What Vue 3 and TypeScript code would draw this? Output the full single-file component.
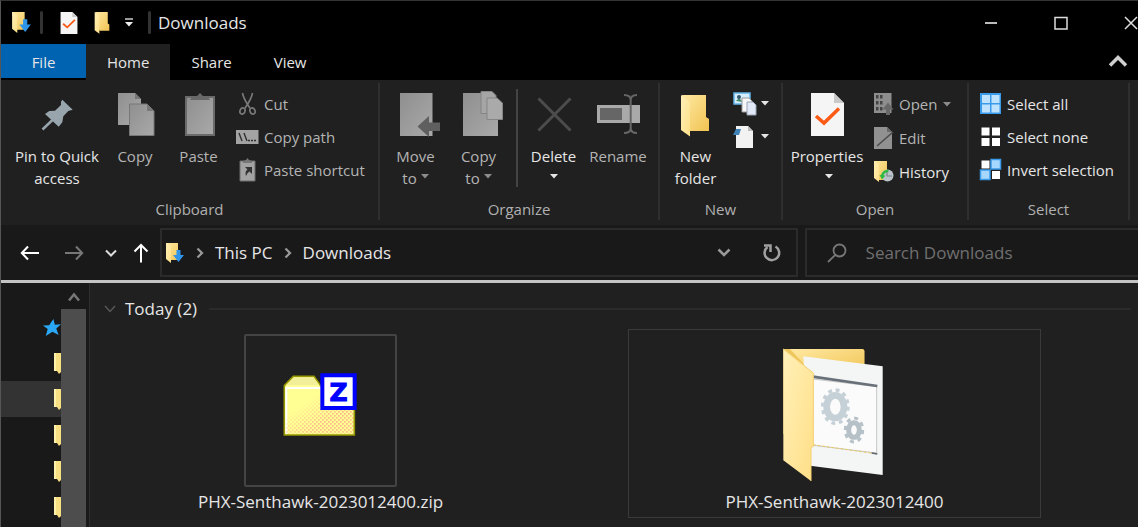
<script setup lang="ts">
interface Command {
  label: string
  icon: string
  muted?: boolean
  caret?: boolean
}

const tabs: string[] = ['Home', 'Share', 'View']

const clipboardCommands: Command[] = [
  { label: 'Cut', icon: 'cut', muted: true },
  { label: 'Copy path', icon: 'path', muted: true },
  { label: 'Paste shortcut', icon: 'shortcut', muted: true },
]

const openCommands: Command[] = [
  { label: 'Open', icon: 'open', muted: true, caret: true },
  { label: 'Edit', icon: 'edit', muted: true },
  { label: 'History', icon: 'history' },
]

const selectCommands: Command[] = [
  { label: 'Select all', icon: 'all' },
  { label: 'Select none', icon: 'none' },
  { label: 'Invert selection', icon: 'invert' },
]

const pinnedFolders: { id: number; current: boolean }[] = [1, 2, 3, 4, 5].map((id) => ({
  id,
  current: id === 2,
}))
</script>

<template>
  <div class="window">
    <svg class="sprite" width="0" height="0" aria-hidden="true">
      <defs>
        <linearGradient id="gold" x1="0" y1="0" x2="1" y2="1">
          <stop offset="0" stop-color="#ffe9a2" />
          <stop offset="1" stop-color="#f0c352" />
        </linearGradient>
        <linearGradient id="flap" x1="0" y1="0" x2="1" y2="1">
          <stop offset="0" stop-color="#fff0b8" />
          <stop offset="1" stop-color="#ffdf87" />
        </linearGradient>
        <linearGradient id="grey" x1="0" y1="0" x2="1" y2="1">
          <stop offset="0" stop-color="#8f8f8f" />
          <stop offset="1" stop-color="#a9a9a9" />
        </linearGradient>
      </defs>
      <symbol id="i-caret" viewBox="0 0 8 5"><path d="M0 0h8L4 4.5z" fill="currentColor" /></symbol>
      <symbol id="i-folder" viewBox="0 0 28 42">
        <path d="M1 0h24v22l3 2v12H9z" fill="url(#gold)" />
        <path d="M0 0l9 7v34.500L0 35z" fill="url(#flap)" />
      </symbol>
      <symbol id="i-downloads" viewBox="0 0 20 22">
        <path d="M1 1h12v11l2 1v5H5z" fill="url(#gold)" />
        <path d="M1 1l5 3v17l-5-4z" fill="url(#flap)" />
        <path d="M11.500 8h4v5H19l-5.500 7L8 13h3.500z" fill="#2f95ea" />
      </symbol>
      <symbol id="i-document" viewBox="0 0 33 43">
        <path d="M0 0h23l10 10v33H0z" fill="#f5f5f5" />
        <path d="M23 0v10h10z" fill="#c9c9c9" />
        <path d="M5 23l8 7L28 15.500" fill="none" stroke="#fb5a14" stroke-width="3.500" />
      </symbol>
      <symbol id="i-cut" viewBox="0 0 24 24">
        <g fill="none" stroke="#7a7a7a" stroke-width="1.600">
          <path d="M6.500 1c1 6 4 10 7.500 15M16.500 1c-1 6-4 10-7.500 15" />
          <ellipse cx="6.500" cy="19" rx="2.500" ry="3.200" transform="rotate(20 6.500 19)" />
          <ellipse cx="16.500" cy="19" rx="2.500" ry="3.200" transform="rotate(-20 16.500 19)" />
        </g>
      </symbol>
      <symbol id="i-path" viewBox="0 0 24 24">
        <path d="M0 5h22.500v14H0z" fill="#a3a3a3" />
        <path d="M3 8l3 8M8 8l3 8M12 15.500h2M15 15.500h2M18 15.500h2" stroke="#303030" stroke-width="1.400" />
      </symbol>
      <symbol id="i-shortcut" viewBox="0 0 24 24">
        <path d="M4 3h15v20H4z" fill="#a3a3a3" stroke="#6d6d6d" />
        <path d="M7 5V3l3-1 1.500-2L13 2l3 1v2z" fill="#777" />
        <path d="M9 9h7v7l-2.500-2.500C11 15 11 16.500 10 18c-1-4 0-5.500 1.500-6.500z" fill="#333" />
      </symbol>
      <symbol id="i-open" viewBox="0 0 24 24">
        <path d="M1 1h17.500v20H1z" fill="#8e8e8e" />
        <path d="M3 3h2.500v3.500H3zM7 3h2.500v3.500H7zM3 9h2.500v3.500H3zM7 9h2.500v3.500H7zM3 15h2.500v3.500H3zM7 15h2.500v3.500H7z" fill="#444" />
        <path d="M15 10.500l5.500 7H17V23h-4v-5.500H9.500z" fill="#686868" />
      </symbol>
      <symbol id="i-edit" viewBox="0 0 24 24">
        <path d="M1 1h13l5 5v17H1z" fill="#919191" />
        <path d="M4 20L20 6" stroke="#4b4b4b" stroke-width="1.600" />
        <path d="M14 1v5h5z" fill="#686868" />
      </symbol>
      <symbol id="i-history" viewBox="0 0 24 24">
        <path d="M1 1h13v19H5z" fill="url(#gold)" />
        <path d="M1 1l5 3v18l-5-4z" fill="url(#flap)" />
        <circle cx="14.500" cy="15.500" r="6" fill="#b9c3c9" />
        <path d="M14 12v4h5" fill="none" stroke="#7b868c" stroke-width="1.200" />
        <path d="M9 17c0-4 3-6.500 6.500-6" fill="none" stroke="#2dbb3f" stroke-width="2.500" />
        <path d="M6.500 15l6 .5-3.500 4z" fill="#2dbb3f" />
      </symbol>
      <symbol id="i-all" viewBox="0 0 24 24">
        <path d="M1 1h21v21H1z" fill="#3a9bea" />
        <path d="M3 3h8v8H3zM12.500 3h8v8h-8zM3 12.500h8v8H3zM12.500 12.500h8v8h-8z" fill="#bfe3ff" />
      </symbol>
      <symbol id="i-none" viewBox="0 0 24 24">
        <path d="M2.500 2.500h8v8h-8zM13 2.500h8v8h-8zM2.500 13h8v8h-8zM13 13h8v8h-8z" fill="#fff" />
      </symbol>
      <symbol id="i-invert" viewBox="0 0 24 24">
        <path d="M2.500 2.500h8v8h-8zM13 13h8v8h-8z" fill="#fff" />
        <path d="M12 1.500h9.500v9.500H12zM1.500 12H11v9.500H1.500z" fill="#a6d8ff" stroke="#3a9bea" stroke-width="1.500" />
      </symbol>
      <symbol id="i-right" viewBox="0 0 8 12"><path d="M1.500 1.500L6 6l-4.500 4.500" fill="none" stroke="#9a9a9a" stroke-width="2.200" /></symbol>
    </svg>

    <header class="title-bar">
      <svg class="quick downloads"><use href="#i-downloads" /></svg>
      <span class="bar"></span>
      <button class="quick-button" aria-label="Properties"><svg class="quick"><use href="#i-document" /></svg></button>
      <button class="quick-button" aria-label="New folder"><svg class="quick"><use href="#i-folder" /></svg></button>
      <button class="quick-button menu" aria-label="Customize Quick Access Toolbar">
        <svg width="10" height="9" viewBox="0 0 10 9"><path d="M1 1h8" stroke="#ccc" stroke-width="1.500" /><path d="M1 4h8L5 8.500z" fill="#eee" /></svg>
      </button>
      <span class="bar second"></span>
      <h1>Downloads</h1>
      <div class="controls">
        <button aria-label="Minimize"><svg width="14" height="14" viewBox="0 0 14 14"><path d="M1 7h12" stroke="#bbb" stroke-width="2" /></svg></button>
        <button aria-label="Maximize"><svg width="14" height="14" viewBox="0 0 14 14"><path d="M1 1.500h12v11.500H1z" fill="none" stroke="#ddd" stroke-width="1.500" /></svg></button>
        <button aria-label="Close"><svg width="14" height="14" viewBox="0 0 14 14"><path d="M1 1l12 12M13 1L1 13" stroke="#ddd" stroke-width="1.500" /></svg></button>
      </div>
    </header>

    <nav class="tabs" aria-label="Ribbon tabs">
      <button class="file">File</button>
      <button v-for="tab in tabs" :key="tab" :class="{ active: tab === 'Home' }">{{ tab }}</button>
      <button class="collapse" aria-label="Minimize the Ribbon">
        <svg width="20" height="14" viewBox="0 0 20 14"><path d="M2 11.500l8-8 8 8" fill="none" stroke="#d0d0d0" stroke-width="3.500" /></svg>
      </button>
    </nav>

    <div class="ribbon">
      <section class="group">
        <div class="commands clipboard">
          <button class="big pin">
            <svg viewBox="0 0 48 50"><path d="M29.300 8.700L39.700 18.700 35.300 20 30.300 25.300 29.300 31.300 25.700 35.700 12 23 16.300 20 22 19.700 28 14 28 10.700z" fill="#98a5ad" /><path d="M9.500 38.500L21 27.500" stroke="#98a5ad" stroke-width="2.500" /></svg>
            <span>Pin to Quick<br />access</span>
          </button>
          <button class="big narrow muted">
            <svg viewBox="0 0 48 50"><path d="M7 2h17l6 6v26H7z" fill="url(#grey)" /><path d="M24 2v6h6z" fill="#777" /><path d="M18.500 13h17.500l7 7v24.500H18.500z" fill="url(#grey)" stroke="#777" /><path d="M36 13v7h7z" fill="#777" /></svg>
            <span>Copy</span>
          </button>
          <button class="big paste muted">
            <svg viewBox="0 0 48 50"><path d="M11 6h28v38H11z" fill="url(#grey)" stroke="#6a6a6a" stroke-width="2" /><path d="M15 9l2.500-4h4.500L25 2l3 3h4.500l2.500 4z" fill="#686868" /></svg>
            <span>Paste</span>
          </button>
          <div class="stack">
            <button v-for="item in clipboardCommands" :key="item.icon" :class="{ muted: item.muted }">
              <svg><use :href="'#i-' + item.icon" /></svg>{{ item.label }}
            </button>
          </div>
        </div>
        <h2>Clipboard</h2>
      </section>

      <section class="group">
        <div class="commands organize">
          <button class="big muted">
            <svg viewBox="0 0 48 50"><path d="M8 2h32.500v43H8z" fill="url(#grey)" /><path d="M25.500 35.500L37 25v6.500h11V40H37v6z" fill="#5f5f5f" /></svg>
            <span>Move<br />to <svg class="caret"><use href="#i-caret" /></svg></span>
          </button>
          <button class="big muted">
            <svg viewBox="0 0 48 50"><path d="M8 2h25l10 10v33H8z" fill="url(#grey)" /><path d="M26 .5h11l4 4v18H26z" fill="#a5a5a5" stroke="#858585" /><path d="M32 7h10l5.500 5v16.500H32z" fill="#aaa" stroke="#858585" /></svg>
            <span>Copy<br />to <svg class="caret"><use href="#i-caret" /></svg></span>
          </button>
          <i class="rule"></i>
          <button class="big">
            <svg viewBox="0 0 48 50"><path d="M8.500 7.500l32 32M40.500 7.500l-32 32" stroke="#4c4c4c" stroke-width="3" /></svg>
            <span>Delete</span><svg class="caret lone"><use href="#i-caret" /></svg>
          </button>
          <button class="big rename muted">
            <svg viewBox="0 0 48 50"><path d="M3 14h43v18H3z" fill="#a9a9a9" /><path d="M6 17h22v12H6z" fill="#666" /><path d="M30 4c4 0 6.700 1.500 6.700 5 0-3.500 2.300-5 6.300-5M36.700 9v28M30 42c4 0 6.700-1.500 6.700-5 0 3.500 2.300 5 6.300 5" fill="none" stroke="#666" stroke-width="2" /></svg>
            <span>Rename</span>
          </button>
        </div>
        <h2>Organize</h2>
      </section>

      <section class="group">
        <div class="commands new">
          <button class="big">
            <svg viewBox="0 0 48 50"><use href="#i-folder" x="9" y="4" width="28" height="42" /></svg>
            <span>New<br />folder</span>
          </button>
          <div class="stack icons">
            <button aria-label="New item">
              <svg viewBox="0 0 24 24"><path d="M1 1h16v11H1z" fill="#d6eefc" stroke="#62b4e8" stroke-width="1.500" /><path d="M3 9l3-3 4 4z" fill="#468d69" /><circle cx="6" cy="5" r="2" fill="#33566d" /><path d="M9 6h7l3 3v11H9z" fill="#f7f7f7" stroke="#9a9a9a" /><path d="M14 10h6l3 3v10h-9z" fill="#e1e9f8" stroke="#9ba3b5" /></svg>
              <svg class="caret"><use href="#i-caret" /></svg>
            </button>
            <button aria-label="Easy access">
              <svg viewBox="0 0 24 24"><path d="M3 1h12l5 5v17H3z" fill="#f2f2f2" /><path d="M15 1v5h5z" fill="#bbb" /><path d="M3 4h5l-2 6H0z" fill="#3f82b8" /></svg>
              <svg class="caret"><use href="#i-caret" /></svg>
            </button>
          </div>
        </div>
        <h2>New</h2>
      </section>

      <section class="group">
        <div class="commands open">
          <button class="big wide">
            <svg viewBox="0 0 48 50"><use href="#i-document" x="8" y="2" width="33" height="43" /></svg>
            <span>Properties</span><svg class="caret lone"><use href="#i-caret" /></svg>
          </button>
          <div class="stack">
            <button v-for="item in openCommands" :key="item.icon" :class="{ muted: item.muted }">
              <svg><use :href="'#i-' + item.icon" /></svg>{{ item.label }}
              <svg v-if="item.caret" class="caret"><use href="#i-caret" /></svg>
            </button>
          </div>
        </div>
        <h2>Open</h2>
      </section>

      <section class="group">
        <div class="commands select">
          <div class="stack">
            <button v-for="item in selectCommands" :key="item.icon">
              <svg><use :href="'#i-' + item.icon" /></svg>{{ item.label }}
            </button>
          </div>
        </div>
        <h2>Select</h2>
      </section>
    </div>

    <div class="navigation">
      <div class="arrows">
        <button aria-label="Back"><svg width="20" height="16" viewBox="0 0 20 16"><path d="M19 8H2M8 1.500L1.800 8 8 14.500" fill="none" stroke="#fff" stroke-width="2" /></svg></button>
        <button aria-label="Forward"><svg width="20" height="16" viewBox="0 0 20 16"><path d="M1 8h17M12 1.500L18.200 8 12 14.500" fill="none" stroke="#777" stroke-width="2" /></svg></button>
        <button class="slim" aria-label="Recent locations"><svg width="12" height="8" viewBox="0 0 12 8"><path d="M1 1.500l5 5 5-5" fill="none" stroke="#ddd" stroke-width="2" /></svg></button>
        <button class="slim" aria-label="Up"><svg width="16" height="20" viewBox="0 0 16 20"><path d="M8 19.500V2M1.500 8.500L8 2l6.500 6.500" fill="none" stroke="#fff" stroke-width="2" /></svg></button>
      </div>
      <div class="address">
        <svg class="place"><use href="#i-downloads" /></svg>
        <svg class="right"><use href="#i-right" /></svg>
        <a href="#this-pc">This PC</a>
        <svg class="right"><use href="#i-right" /></svg>
        <a href="#downloads">Downloads</a>
        <button class="previous" aria-label="Previous locations"><svg width="14" height="10" viewBox="0 0 14 10"><path d="M1.500 1.500L7 7l5.500-5.500" fill="none" stroke="#999" stroke-width="2.500" /></svg></button>
        <button aria-label="Refresh"><svg width="20" height="20" viewBox="0 0 20 20"><path d="M13.500 3.500a7.300 7.300 0 1 1-8 .5" fill="none" stroke="#a0a0a0" stroke-width="2.500" /><path d="M2 2.500h6.500V9" fill="none" stroke="#a0a0a0" stroke-width="2.500" /></svg></button>
      </div>
      <label class="search">
        <svg width="20" height="20" viewBox="0 0 20 20"><circle cx="12.500" cy="7.500" r="6" fill="none" stroke="#777" stroke-width="1.800" /><path d="M8.300 11.800L1 19" stroke="#777" stroke-width="1.800" /></svg>
        <input type="search" placeholder="Search Downloads" aria-label="Search Downloads" />
      </label>
    </div>

    <div class="body">
      <aside>
        <div class="tree">
          <div class="row"><svg class="star" viewBox="0 0 20 20"><path d="M12 1l1.500 6 6.500-.5-5 4.500 2.500 7-6.500-3.500L4 19l2-7.500L1 8l6.500-.5z" fill="#2ba8f5" /></svg></div>
          <div v-for="folder in pinnedFolders" :key="folder.id" class="row" :class="{ current: folder.current }">
            <svg class="sliver" viewBox="0 0 7 21"><path d="M0 0h7v19l-2 2-2-3H0z" fill="#f8df82" /><path d="M0 0h2v18H0z" fill="#fff0ac" /></svg>
          </div>
        </div>
        <div class="scroll">
          <button aria-label="Scroll up"><svg width="12" height="10" viewBox="0 0 12 10"><path d="M1 8.500l5-6 5 6" fill="none" stroke="#777" stroke-width="2.500" /></svg></button>
          <div class="thumb"></div>
        </div>
      </aside>
      <main>
        <div class="heading">
          <svg width="12" height="8" viewBox="0 0 12 8"><path d="M1 1l5 5.500L11 1" fill="none" stroke="#5a5a5a" stroke-width="1.300" /></svg>
          <h2>Today (2)</h2>
          <hr />
        </div>
        <div class="files">
          <div class="file-item">
            <div class="thumbnail framed">
              <svg width="78" height="78" viewBox="306 141 234 234">
                <defs>
                  <pattern id="speckle" width="12" height="12" patternUnits="userSpaceOnUse"><path d="M0 0h5v5H0zM6 6h5v5H6z" fill="#ffb78c" /></pattern>
                  <linearGradient id="fade" x1="0" y1="0" x2="1" y2="1"><stop offset=".3" stop-color="#000" /><stop offset=".65" stop-color="#fff" /></linearGradient>
                  <mask id="corner"><path d="M318 190h202v136H318z" fill="url(#fade)" /></mask>
                </defs>
                <path d="M313 182l27-28h62l20 28h101v148H313z" fill="#ffff94" stroke="#969600" stroke-width="5" />
                <path d="M318 180l24-23h58l18 23z" fill="#f3ee9a" />
                <path d="M319 326V189h104" fill="none" stroke="#fff" stroke-width="6" />
                <path d="M318 190h202v136H318z" fill="url(#speckle)" mask="url(#corner)" />
                <path d="M427 151h97v98h-97z" fill="#fff" stroke="#00f" stroke-width="12" />
                <text x="476" y="228" text-anchor="middle" font-family="DejaVu Sans" font-weight="700" font-size="75" fill="#00f" stroke="#00f" stroke-width="3">Z</text>
              </svg>
            </div>
            <span>PHX-Senthawk-2023012400.zip</span>
          </div>
          <div class="file-item outlined">
            <div class="thumbnail">
              <svg width="106" height="140" viewBox="486 66 318 420">
                <path d="M490 72h239l4 5v250H490z" fill="#edc65e" />
                <path d="M510 72h219l4 5v70H580z" fill="url(#gold)" />
                <path d="M550 94l238 30v326l-218-28z" fill="#f4f5f5" />
                <path d="M578 162l192 23v199l-192-23z" fill="#fbfbfb" stroke="#c8c8c8" stroke-width="3" />
                <path d="M578 155l194 28" stroke="#68717a" stroke-width="8" />
                <path d="M578 359l182 26" stroke="#e6ca68" stroke-width="3" stroke-dasharray="10 4" />
                <path d="M755 384l17 3" stroke="#5d666d" stroke-width="5" />
                <g fill="none">
                  <ellipse cx="646" cy="245" rx="26" ry="34" stroke="#c5d0d7" stroke-width="20" />
                  <ellipse cx="646" cy="245" rx="38" ry="50" stroke="#c5d0d7" stroke-width="10" pathLength="120" stroke-dasharray="5 5" />
                  <ellipse cx="702" cy="315" rx="16" ry="22" stroke="#b5c0c7" stroke-width="15" />
                  <ellipse cx="702" cy="315" rx="26" ry="36" stroke="#b5c0c7" stroke-width="9" pathLength="80" stroke-dasharray="5 5" />
                </g>
                <path d="M490 72l90 72v220l-7 4v100l-83-62z" fill="url(#flap)" />
                <path d="M490 72l90 72v220l-7 4v100" fill="none" stroke="#f5d071" stroke-width="3" />
              </svg>
            </div>
            <span>PHX-Senthawk-2023012400</span>
          </div>
        </div>
      </main>
    </div>
  </div>
</template>

<style>
body { margin: 0; background: #202020; }
</style>

<style scoped>
.window {
  display: flex;
  flex-direction: column;
  box-sizing: border-box;
  min-height: 100vh;
  overflow: hidden;
  border-top: 1px solid #333;
  border-left: 1px solid #555;
  background: #000;
  color: #e6e6e6;
  font: 15px/22px "Open Sans", "Noto Sans", sans-serif;
}
* { box-sizing: border-box; }
.sprite { position: absolute; }
button { margin: 0; padding: 0; border: 0; background: none; color: inherit; font: inherit; }
button, svg { flex: none; }
h1, h2 { margin: 0; font-weight: 400; }

.title-bar { display: flex; align-items: center; height: 43px; padding-left: 10px; }
.title-bar h1 { margin-left: 7px; font-size: 17px; line-height: 24px; }
.quick { display: block; width: 18px; height: 22px; }
.quick.downloads { width: 21px; height: 23px; }
.bar { width: 3px; height: 23px; margin: 0 15px 0 8px; border-radius: 2px; background: #333; }
.bar.second { margin: 0 0 0 8px; }
.quick-button { display: flex; justify-content: center; width: 32px; }
.quick-button:first-of-type { width: 22px; margin-right: 6px; }
.quick-button.menu { width: 22px; }
.controls { display: flex; margin: 0 -28px 0 auto; }
.controls button { display: flex; justify-content: center; width: 70px; }

.tabs { display: flex; height: 36px; }
.tabs button { padding: 0 21px; line-height: 36px; }
.tabs .file { width: 85px; height: 34px; background: #0063b1; }
.tabs .active { background: #202020; }
.tabs .collapse { margin-left: auto; padding: 0 10px; }

.ribbon {
  display: grid;
  grid-template-columns: 379fr 280fr 123fr 186fr 161fr;
  height: 145px;
  padding: 3px 8px 6px 0;
  background: #202020;
}
.group { display: flex; flex-direction: column; border-right: 2px solid #2f2f2f; }
.group h2 { color: #b0b0b0; font-size: 15px; line-height: 22px; text-align: center; }
.commands { display: flex; height: 115px; }
.big { display: flex; flex-direction: column; align-items: center; width: 63px; padding-top: 8px; text-align: center; }
.big > svg { width: 48px; height: 50px; margin-bottom: 4px; }
.muted { color: #b4b4b4; }
.big .caret, .stack .caret { width: 8px; height: 5px; margin: 0; }
.muted .caret { color: #8c8c8c; }
.big span .caret { vertical-align: 5px; }
.big .caret.lone { margin-top: 7px; }
.pin { width: 98px; }
.big.narrow { width: 58px; }
.big.paste { width: 69px; }
.big.wide { width: 80px; }
.big.rename { width: 66px; }
.clipboard { padding-left: 7px; }
.organize { padding-left: 4px; }
.new, .open { padding-left: 4px; }
.select { padding-left: 4px; }
.rule { width: 2px; height: 98px; margin: 6px 4px 0 6px; background: #444; }
.stack { display: flex; flex-direction: column; padding-top: 4px; margin-left: 6px; }
.clipboard .stack { margin-left: 3px; }
.stack button { display: flex; align-items: center; height: 33px; gap: 4px; white-space: nowrap; }
.stack svg { width: 24px; height: 24px; }
.open .stack button { height: 34px; gap: 2px; }
.open .caret { margin-left: 4px; }

.navigation {
  display: grid;
  grid-template-columns: 159px minmax(0, 640fr) minmax(0, 331fr);
  height: 55px;
  padding: 3px 0;
  background: #191919;
}
.arrows { display: flex; padding-left: 7px; }
.arrows button { display: flex; align-items: center; justify-content: center; width: 44px; }
.arrows .slim { width: 30px; }
.address, .search { display: flex; align-items: center; border: 2px solid #2b2b2b; font-size: 17px; line-height: 24px; }
.address { padding-left: 3px; margin-right: 7px; }
.address a { color: inherit; text-decoration: none; }
.place { width: 20px; height: 22px; }
.right { width: 8px; height: 12px; margin: 0 11px; }
.address button { display: flex; justify-content: center; width: 48px; }
.address .previous { margin-left: auto; }
.search { padding-left: 20px; border-right: 0; }
.search input { flex: 1; min-width: 0; margin: 0 0 0 19px; padding: 0; border: 0; outline: 0; background: none; color: #ddd; font: inherit; }
.search input::placeholder { color: #707070; opacity: 1; }

.body { display: flex; flex: 1; border-top: 3px solid #c4c4c4; background: #202020; }
aside { display: flex; flex: none; width: 89px; padding-right: 3px; border-right: 1px solid #2e2e2e; background: #191919; }
.tree { flex: 1; padding-top: 26px; }
.row { display: flex; align-items: center; justify-content: flex-end; height: 36px; overflow: hidden; }
.row.current { background: #333; }
.star { width: 19px; height: 19px; }
.sliver { width: 7px; height: 21px; }
.scroll { display: flex; flex-direction: column; width: 25px; }
.scroll button { height: 26px; }
.thumb { flex: 1; background: #4d4d4d; }
main { flex: 1; min-width: 0; }
.heading { display: flex; align-items: center; padding: 14px 7px 0 14px; }
.heading h2 { margin: 0 12px 0 9px; font-size: 17px; line-height: 24px; }
.heading hr { flex: 1; margin: 0; border: 0; border-top: 2px solid #2b2b2b; }
.files { display: grid; grid-template-columns: 1fr 1fr; gap: 101px; padding: 8px 97px 9px 24px; }
.file-item { display: flex; flex-direction: column; align-items: center; padding: 4px 0 3px; border: 1px solid transparent; font-size: 17px; line-height: 24px; }
.outlined { border-color: #3a3a3a; }
.thumbnail { display: flex; align-items: flex-end; justify-content: center; height: 153px; margin-bottom: 3px; }
.thumbnail.framed { align-items: center; width: 153px; border: 2px solid #444; border-radius: 2px; }
</style>
